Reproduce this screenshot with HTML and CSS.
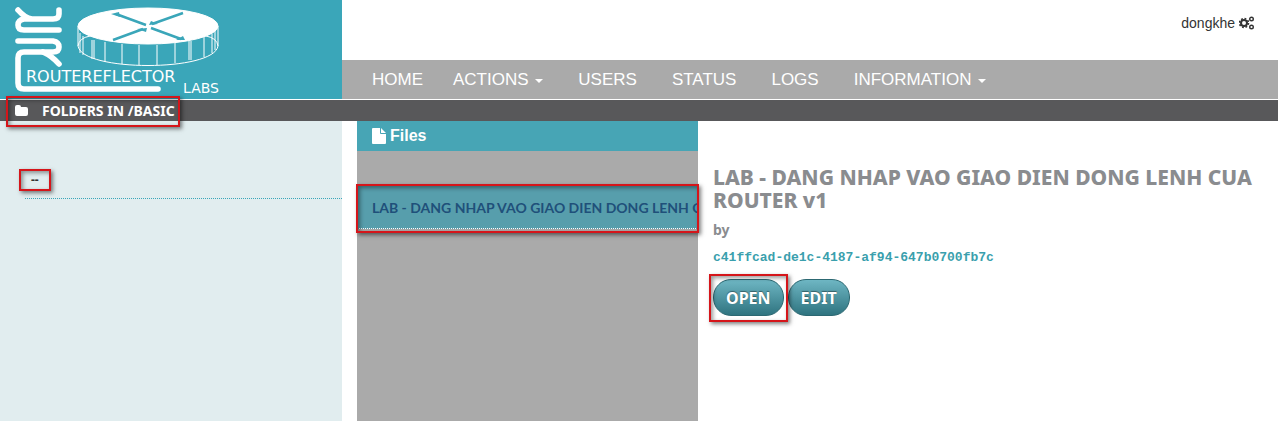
FILE: index.html
```html
<!DOCTYPE html>
<html lang="en">
<head>
    <meta charset="UTF-8">
    <meta name="viewport" content="width=device-width, initial-scale=1.0">
    <title>RouteReflector Labs</title>
    <link rel="stylesheet" href="styles.css">
</head>
<body>
    <header>
        <a class="logo" href="#" aria-label="RouteReflector Labs">
            <svg width="240" height="99" viewBox="0 0 240 99" fill="none" stroke="#fff">
                <!-- monogram -->
                <g stroke-width="5.6" stroke-linecap="round" stroke-linejoin="round">
                    <path d="M18 10 Q25 18 32 19 M59 10 V14 Q59 19 53 19 H24 Q18 20 18 25 Q18 30 24 30 H59"/>
                    <path d="M18 41 H53 Q59 42 59 47 Q59 52 53 52 H24 Q18 52 18 58 V83 Q18 89 24 89 H158"/>
                    <path d="M43 52 Q52 56 59 64"/>
                </g>
                <!-- router drum -->
                <ellipse cx="148" cy="26" rx="70" ry="18" fill="#fff"/>
                <path d="M78 26 V46 C82 72 214 72 218 46 V26 M78 46 Q79 38 90 36 M218 46 Q217 38 206 36"/>
                <path d="M80 33V53 M83 36V55 M92 40V59 M94 40V59 M105 42V62 M122 44V64 M139 45V65 M157 45V65 M175 43V63 M189 41V60 M191 41V60 M204 37V57 M212 34V53 M215 31V50"/>
                <g stroke="#3aa6b9" fill="#3aa6b9">
                    <path d="M146 25 L116 14 M183 13 L152 24 M113 40 L143 29 M151 28 L181 39" stroke-width="2.4"/>
                    <path d="M111 14 L119 12 L120 17Z M149 25 L151 21 L158 24Z M147 28 L137 29 L146 32Z M185 40 L183 36 L176 40Z" stroke="none"/>
                </g>
                <g fill="#fff" stroke="none" class="logo-text">
                    <text x="26" y="82" font-size="16">ROUTEREFLECTOR</text>
                    <text x="219" y="93" font-size="14" text-anchor="end">LABS</text>
                </g>
            </svg>
        </a>
        <div class="top">
            <a class="user" href="#">dongkhe
                <svg width="16" height="14" viewBox="0 0 16 14" fill="none" stroke="#333">
                    <circle cx="5" cy="7" r="3" stroke-width="2"/>
                    <circle cx="5" cy="7" r="4.5" stroke-width="1.6" stroke-dasharray="1.8 1.73"/>
                    <circle cx="12.5" cy="3" r="1.8" stroke-width="1.4"/>
                    <circle cx="12.5" cy="11" r="1.8" stroke-width="1.4"/>
                </svg>
            </a>
            <nav>
                <a href="#">HOME</a>
                <a href="#">ACTIONS <span class="caret"></span></a>
                <a href="#">USERS</a>
                <a href="#">STATUS</a>
                <a href="#">LOGS</a>
                <a href="#">INFORMATION <span class="caret"></span></a>
            </nav>
        </div>
    </header>

    <div class="bar">
        <h2 class="path">
            <svg width="13" height="11" viewBox="0 0 13 11" fill="#fff"><path d="M0 2Q0 0 2 0H4Q6 0 6 2H11Q13 2 13 4V9Q13 11 11 11H2Q0 11 0 9Z"/></svg>
            FOLDERS IN /BASIC
            <span class="mark"></span>
        </h2>
    </div>

    <main>
        <section class="folders">
            <a href="#"><span class="folder">--<span class="mark"></span></span></a>
        </section>
        <section class="files">
            <h3>
                <svg width="14" height="16" viewBox="0 0 14 16" fill="#fff"><path d="M1 0H8V5Q8 6 9 6H14V15Q14 16 13 16H1Q0 16 0 15V1Q0 0 1 0ZM9 0L14 5H9Z"/></svg>
                Files
            </h3>
            <div class="file">
                <a href="#">LAB - DANG NHAP VAO GIAO DIEN DONG LENH CUA ROUTER v1</a>
                <span class="mark"></span>
            </div>
        </section>
        <section class="detail">
            <h1>LAB - DANG NHAP VAO GIAO DIEN DONG LENH CUA ROUTER v1</h1>
            <p class="author">by</p>
            <p class="uuid">c41ffcad-de1c-4187-af94-647b0700fb7c</p>
            <div class="actions">
                <span class="marked"><button type="button">OPEN</button><span class="mark"></span></span>
                <button type="button">EDIT</button>
            </div>
        </section>
    </main>
</body>
</html>
```
FILE: styles.css
```css
* {
    box-sizing: border-box;
}

body {
    margin: 0;
    min-height: 100vh;
    display: flex;
    flex-direction: column;
    background: #fff;
    color: #333;
    font-family: "Liberation Sans", Arial, sans-serif;
    font-size: 14px;
    line-height: 20px;
}

a {
    color: inherit;
    text-decoration: none;
}

h1, h2, h3, p {
    margin: 0;
}

svg {
    display: block;
    flex: none;
}

header,
main {
    display: grid;
}

header {
    grid-template-columns: 342fr 936fr;
}

.logo {
    background: #3aa6b9;
}

.logo-text {
    font-family: "DejaVu Sans", sans-serif;
}

.top {
    display: flex;
    flex-direction: column;
    justify-content: space-between;
}

.user {
    display: flex;
    align-self: flex-end;
    align-items: center;
    gap: 4px;
    padding: 13px 23px 0 0;
}

nav {
    display: flex;
    padding-left: 15px;
    background: #aaa;
    color: #fff;
    font-size: 17px;
    line-height: 39px;
}

nav a {
    padding: 0 15px;
}

nav a + a {
    padding-right: 20px;
}

.caret {
    display: inline-block;
    margin-left: 2px;
    border: 4px solid transparent;
    border-top-color: #fff;
    border-bottom: 0;
    vertical-align: middle;
}

.bar {
    margin-top: 1px;
    padding-left: 15px;
    background: #58585a;
}

.path {
    position: relative;
    display: inline-flex;
    align-items: center;
    gap: 14px;
    color: #fff;
    font: bold 14px/21px "Noto Sans", sans-serif;
    vertical-align: top;
}

/* red highlight frames */
.mark {
    position: absolute;
    inset: -4px -5px -6px -9px;
    border: 2px solid #d5151a;
    box-shadow: 2px 2px 4px rgba(0, 0, 0, .5), inset 2px 2px 4px rgba(0, 0, 0, .4);
    pointer-events: none;
}

main {
    flex: 1;
    grid-template-columns: 342fr 341fr 565fr;
    column-gap: 15px;
}

.folders {
    padding: 49px 0 0 25px;
    background: #e1edef;
}

.folders a {
    display: block;
    padding-bottom: 8px;
    border-bottom: 1px dotted #3aa6b9;
    font: bold 12px/20px "Noto Sans", sans-serif;
}

.folder {
    position: relative;
    display: inline-block;
    padding: 0 6px;
}

.folder .mark {
    inset: -1px -6px -1px -6px;
}

.files {
    min-width: 0;
    background: #aaa;
}

.files h3 {
    display: flex;
    align-items: center;
    gap: 4px;
    padding-left: 15px;
    background: #47a5b5;
    color: #fff;
    font-size: 16px;
    line-height: 30px;
}

.file {
    position: relative;
    margin-top: 35px;
}

.file a {
    display: block;
    overflow: hidden;
    padding: 12px 0 10px 15px;
    border-bottom: 1px dotted #fff;
    background: #579eac;
    color: #1f507a;
    font: bold 14px/20px Lato, sans-serif;
    white-space: nowrap;
}

.file .mark {
    inset: -2px -1px -4px;
}

.detail {
    padding: 45px 15px 0 0;
    color: #8a8c8f;
    font-family: "Noto Sans", sans-serif;
}

.detail h1 {
    font-size: 21px;
    font-weight: 800;
    line-height: 23px;
}

.author {
    margin-top: 8px;
    font-weight: bold;
}

.uuid {
    margin: 8px 0 11px;
    color: #3a9fad;
    font: bold 13px/20px "Liberation Mono", monospace;
}

.actions {
    display: flex;
    gap: 4px;
}

.marked {
    position: relative;
}

.marked .mark {
    inset: -5px -4px -6px;
}

button {
    display: block;
    height: 37px;
    padding: 0 12px;
    border: 1px solid #2c6872;
    border-radius: 18px;
    background: linear-gradient(#6eb6c3, #2f7480);
    color: #fff;
    font: bold 16px "Noto Sans", sans-serif;
    text-shadow: 0 -1px 1px rgba(0, 0, 0, .4);
}
```
